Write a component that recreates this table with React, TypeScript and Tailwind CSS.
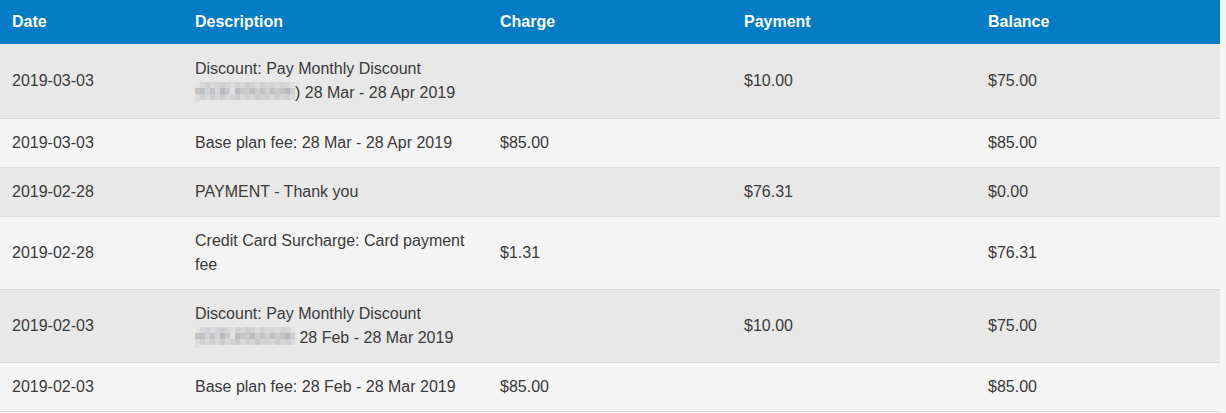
import React from "react";

const mosaicA = [
  ["bg-[#e4e4e4]","bg-[#d8d8da]","bg-[#d0d0d2]","bg-[#dadada]","bg-[#d4d4d6]","bg-[#cfcfd3]","bg-[#d6d6d6]","bg-[#dcdcdc]","bg-[#d2d2d4]","bg-[#d8d8d8]","bg-[#cdcdd0]","bg-[#d3d3d3]","bg-[#dcdcdc]","bg-[#d0d0d2]","bg-[#d8d8d8]","bg-[#d4d4d4]","bg-[#dadada]","bg-[#d2d2d2]","bg-[#d6d6d6]","bg-[#e0e0e0]"],
  ["bg-[#c8c2bf]","bg-[#bfc0c4]","bg-[#cdd3da]","bg-[#c4c4c6]","bg-[#d6d6d6]","bg-[#b9b9bc]","bg-[#c9c9c9]","bg-[#dde3e8]","bg-[#bdbdc0]","bg-[#c6c6c6]","bg-[#cfc9c6]","bg-[#bcbcbf]","bg-[#cfcfcf]","bg-[#c2c2c4]","bg-[#d3cfcd]","bg-[#bfbfc2]","bg-[#cbcbcb]","bg-[#c4c4c7]","bg-[#b8b8bc]","bg-[#cfcfcf]"],
  ["bg-[#dcdcdc]","bg-[#d0d0d0]","bg-[#d9d9d9]","bg-[#cfcfcf]","bg-[#d6d6d6]","bg-[#cbcbcb]","bg-[#d8d8d8]","bg-[#d2d2d2]","bg-[#cccccc]","bg-[#d9d9d9]","bg-[#d0d0d0]","bg-[#d6d6d6]","bg-[#cacaca]","bg-[#d4d4d4]","bg-[#d0d0d0]","bg-[#d8d8d8]","bg-[#cdcdcd]","bg-[#d5d5d5]","bg-[#d0d0d0]","bg-[#d9d9d9]"],
];

function Mosaic() {
  return (
    <span className="inline-block overflow-hidden align-[-5px] w-[100px] h-[21px]">
      {mosaicA.map((row, i) => (
        <span key={i} className="flex">
          {row.map((c, j) => (
            <span key={j} className={`block w-[5px] h-[6px] ${c}`} />
          ))}
        </span>
      ))}
      <span className="block w-[5px] h-[3px] bg-[#dedede]" />
    </span>
  );
}

type Row = {
  date: string;
  desc: React.ReactNode;
  charge?: string;
  payment?: string;
  balance: string;
};

const rows: Row[] = [
  {
    date: "2019-03-03",
    desc: (
      <>
        Discount: Pay Monthly Discount <Mosaic />) 28 Mar - 28 Apr 2019
      </>
    ),
    payment: "$10.00",
    balance: "$75.00",
  },
  { date: "2019-03-03", desc: "Base plan fee: 28 Mar - 28 Apr 2019", charge: "$85.00", balance: "$85.00" },
  { date: "2019-02-28", desc: "PAYMENT - Thank you", payment: "$76.31", balance: "$0.00" },
  { date: "2019-02-28", desc: "Credit Card Surcharge: Card payment fee", charge: "$1.31", balance: "$76.31" },
  {
    date: "2019-02-03",
    desc: (
      <>
        Discount: Pay Monthly Discount <Mosaic /> 28 Feb - 28 Mar 2019
      </>
    ),
    payment: "$10.00",
    balance: "$75.00",
  },
  { date: "2019-02-03", desc: "Base plan fee: 28 Feb - 28 Mar 2019", charge: "$85.00", balance: "$85.00" },
];

export default function App() {
  return (
    <div className="min-h-[413px] w-full bg-[#f5f5f5] font-['Liberation_Sans',Arial,sans-serif] text-[16px] text-[#3a3a3a]">
      <table className="w-[1220px] table-fixed border-collapse">
        <colgroup>
          <col className="w-[183px]" />
          <col className="w-[305px]" />
          <col className="w-[244px]" />
          <col className="w-[244px]" />
          <col className="w-[244px]" />
        </colgroup>
        <thead>
          <tr className="bg-[#027cc4] text-white">
            {["Date", "Description", "Charge", "Payment", "Balance"].map((h) => (
              <th key={h} className="h-[44px] px-3 text-left align-middle font-bold leading-[24px]">
                {h}
              </th>
            ))}
          </tr>
        </thead>
        <tbody>
          {rows.map((r, i) => {
            const pad = i === 0 ? "px-3 py-[13px]" : "px-3 py-3";
            return (
              <tr
                key={i}
                className={`${i % 2 === 0 ? "bg-[#e8e8e8]" : "bg-[#f4f4f4]"} border-b border-[#dcdcdc]`}
              >
                <td className={`${pad} align-middle leading-[24px]`}>{r.date}</td>
                <td className={`${pad} align-middle leading-[24px]`}>{r.desc}</td>
                <td className={`${pad} align-middle leading-[24px]`}>{r.charge}</td>
                <td className={`${pad} align-middle leading-[24px]`}>{r.payment}</td>
                <td className={`${pad} align-middle leading-[24px]`}>{r.balance}</td>
              </tr>
            );
          })}
        </tbody>
      </table>
    </div>
  );
}
